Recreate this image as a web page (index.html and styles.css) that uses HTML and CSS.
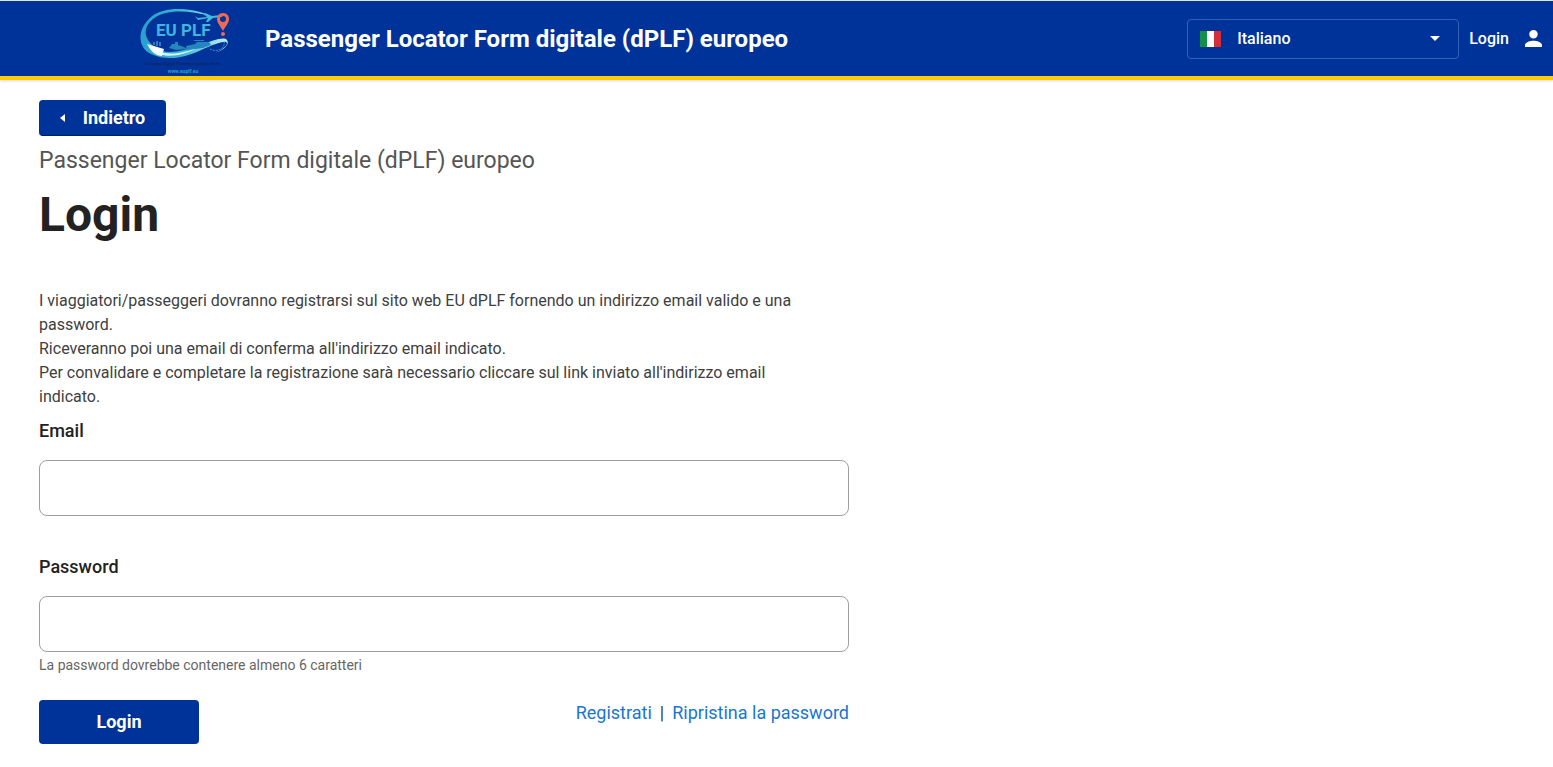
FILE: index.html
```html
<!DOCTYPE html>
<html lang="it">
<head>
<meta charset="utf-8">
<meta name="viewport" content="width=device-width, initial-scale=1">
<title>Login - EU dPLF</title>
<link rel="stylesheet" href="styles.css">
</head>
<body>
<header class="topbar">
  <div class="brand">
    <a class="logo-link" href="#" aria-label="EU PLF">
      <svg class="logo" viewBox="0 -4 96 72">
        <defs>
          <linearGradient id="swoosh" x1="0" y1="0" x2="1" y2="0">
            <stop offset="0" stop-color="#2b9fd0"/>
            <stop offset="0.45" stop-color="#36b4d6"/>
            <stop offset="1" stop-color="#c4eef5"/>
          </linearGradient>
        </defs>
        <path d="M74 9C54 0 27 -1 14 10C-1 23 1 41 14 47C31 55 49 50 64 43C76 38 85 34 89 35C93 37 85 43 78 46C86 43 93 38 90 33C86 29 76 34 63 38C46 44 30 48 21 42C6 33 5 21 16 12C28 2 51 3 74 9Z" fill="url(#swoosh)"/>
        <path d="M20 43C30 49 46 47 62 40C48 48 33 51 22 47Z" fill="#d5f3f8"/>
        <path d="M10 37L27 42L25 49C19 49 14 45 10 37Z" fill="#f3fbff"/>
        <path d="M17 38V35M20 39V34M23 39V35" stroke="#6fbbe0" stroke-width="1"/>
        <path d="M32 41L35 37H38V35H41V38L47 40L50 42L39 43ZM49 39L58 37L60 35H72L74 38L66 41L50 43ZM57 33H67V34H57Z" fill="#2386bd"/>
        <path d="M58 9L61 11L70 10L65 6L68 6L75 9L84 8C86 8 86 10 84 10L76 11L71 15H69L71 11L61 13Z" fill="#43b8dc"/>
        <path d="M73 42C80 46 89 41 87 35" fill="none" stroke="#3e8fc9" stroke-width="1" stroke-dasharray="2 1"/>
        <path fill-rule="evenodd" d="M86 6C82 6 80 9 80 12C80 16 84 20 86 24C88 20 92 16 92 12C92 9 90 6 86 6ZM86 9A3 3 0 1 1 86 15A3 3 0 1 1 86 9Z" fill="#ef6a55"/>
        <circle cx="86" cy="27" r="2" fill="#ef6a55"/>
        <text class="logo-name" x="19" y="29">EU PLF</text>
        <text class="logo-tag" x="46" y="58">European Digital Passenger Locator Form</text>
        <text class="logo-url" x="46" y="66">www.euplf.eu</text>
      </svg>
    </a>
    <span class="brand-title">Passenger Locator Form digitale (dPLF) europeo</span>
  </div>
  <div class="account">
    <div class="language">
      <svg class="flag" viewBox="0 0 21 16" aria-hidden="true">
        <path fill="#fff" d="M0 0h21v16H0z"/><path fill="#159048" d="M0 0h7v16H0z"/><path fill="#d32f3b" d="M14 0h7v16h-7z"/>
      </svg>
      <select class="language-select" aria-label="Lingua"><option>Italiano</option></select>
      <svg class="caret" viewBox="0 0 10 5" aria-hidden="true"><path fill="#fff" d="M0 0h10L5 5z"/></svg>
    </div>
    <a class="login-link" href="#">Login
      <svg class="person" viewBox="4 4 16 16" aria-hidden="true"><path fill="#fff" d="M12 12c2.210 0 4-1.790 4-4s-1.790-4-4-4-4 1.790-4 4 1.790 4 4 4zm0 2c-2.670 0-8 1.340-8 4v2h16v-2c0-2.660-5.330-4-8-4z"/></svg>
    </a>
  </div>
</header>
<main class="content">
  <button class="button back" type="button">
    <svg class="back-arrow" viewBox="0 0 5 8" aria-hidden="true"><path fill="#fff" d="M5 0v8L0 4z"/></svg>
    Indietro
  </button>
  <p class="subtitle">Passenger Locator Form digitale (dPLF) europeo</p>
  <h1 class="title">Login</h1>
  <form class="form">
    <p class="intro">I viaggiatori/passeggeri dovranno registrarsi sul sito web EU dPLF fornendo un indirizzo email valido e una<br>password.<br>Riceveranno poi una email di conferma all'indirizzo email indicato.<br>Per convalidare e completare la registrazione sarà necessario cliccare sul link inviato all'indirizzo email<br>indicato.</p>
    <div class="field">
      <label class="label" for="email">Email</label>
      <input class="input" id="email" type="email">
    </div>
    <div class="field">
      <label class="label" for="password">Password</label>
      <input class="input" id="password" type="password" aria-describedby="hint">
      <p class="hint" id="hint">La password dovrebbe contenere almeno 6 caratteri</p>
    </div>
    <div class="actions">
      <button class="button submit" type="submit">Login</button>
      <div class="links"><a class="link" href="#">Registrati</a><span>|</span><a class="link" href="#">Ripristina la password</a></div>
    </div>
  </form>
</main>
</body>
</html>
```
FILE: styles.css
```css
* { box-sizing: border-box; }
body {
  margin: 0;
  background: #fff;
  color: #404040;
  font: 16px/24px Roboto, "Liberation Sans", sans-serif;
}
.topbar {
  display: flex;
  align-items: center;
  justify-content: space-between;
  min-height: 80px;
  padding: 0 11px 0 137px;
  background: #039;
  border-top: 1px solid #dfe6f3;
  border-bottom: 4px solid #fc0;
  box-shadow: 0 1px 3px rgba(0, 0, 0, 0.15);
  color: #fff;
}
.brand { display: flex; align-items: center; gap: 32px; }
.logo-link { display: block; }
.logo { display: block; width: 96px; height: 72px; }
.logo-name { font: 700 17px Roboto, sans-serif; fill: #43b4dc; }
.logo-tag { font: 700 4px Roboto, sans-serif; fill: #16245c; text-anchor: middle; }
.logo-url { font: 700 5px Roboto, sans-serif; fill: #2b9fd0; text-anchor: middle; }
.brand-title { font-size: 24px; font-weight: 700; line-height: 32px; }
.account { display: flex; align-items: center; gap: 10px; }
.language {
  display: flex;
  align-items: center;
  width: 272px;
  height: 40px;
  padding: 0 18px 0 12px;
  border: 1px solid #3561b5;
  border-radius: 4px;
}
.flag { width: 21px; height: 16px; }
.language-select {
  flex: 1;
  height: 100%;
  padding: 0 16px;
  border: 0;
  background: transparent;
  color: #fff;
  font: 500 16px/24px Roboto, sans-serif;
  appearance: none;
}
.caret { width: 10px; height: 5px; }
.login-link { display: flex; align-items: center; gap: 16px; color: #fff; font-weight: 500; text-decoration: none; }
.person { width: 17px; height: 17px; }
.content { padding: 20px 39px; }
.button {
  display: flex;
  align-items: center;
  justify-content: center;
  border: 0;
  border-radius: 4px;
  background: #039;
  color: #fff;
  font: 700 18px/24px Roboto, sans-serif;
}
.back { gap: 18px; min-width: 127px; height: 36px; padding: 0 16px; border-bottom: 1px solid #001f66; }
.back-arrow { width: 5px; height: 8px; }
.subtitle { margin: 9px 0 0; color: #555; font-size: 23px; line-height: 32px; }
.title { margin: 6px 0 0; color: #222; font-size: 48px; font-weight: 700; line-height: 64px; }
.form { max-width: 810px; margin-top: 42px; }
.intro { margin: 0; }
.field { height: 136px; padding-top: 10px; }
.label { display: block; margin-bottom: 17px; color: #222; font-size: 18px; font-weight: 500; line-height: 24px; }
.input {
  display: block;
  width: 100%;
  height: 56px;
  padding: 0 16px;
  border: 1px solid #9e9e9e;
  border-radius: 8px;
  background: #fff;
  font: 16px/24px Roboto, sans-serif;
}
.hint { margin: 3px 0 0; color: #666; font-size: 14px; line-height: 20px; }
.actions { display: flex; align-items: flex-start; justify-content: space-between; margin-top: 19px; }
.submit { width: 160px; height: 44px; }
.links { display: flex; gap: 8px; font-size: 18px; line-height: 26px; }
.link { color: #1976d2; text-decoration: none; }
```
